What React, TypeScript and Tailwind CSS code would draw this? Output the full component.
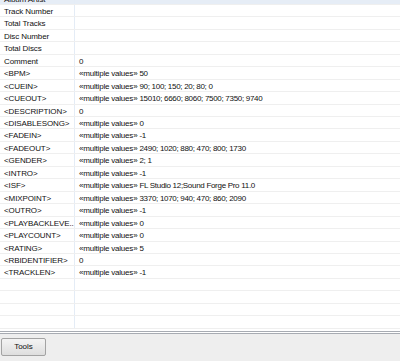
import React from "react";

const rows: [string, string, boolean][] = [
  ["Album Artist", "", false],
  ["Track Number", "", false],
  ["Total Tracks", "", false],
  ["Disc Number", "", false],
  ["Total Discs", "", false],
  ["Comment", "0", false],
  ["<BPM>", "50", true],
  ["<CUEIN>", "90; 100; 150; 20; 80; 0", true],
  ["<CUEOUT>", "15010; 6660; 8060; 7500; 7350; 9740", true],
  ["<DESCRIPTION>", "0", false],
  ["<DISABLESONG>", "0", true],
  ["<FADEIN>", "-1", true],
  ["<FADEOUT>", "2490; 1020; 880; 470; 800; 1730", true],
  ["<GENDER>", "2; 1", true],
  ["<INTRO>", "-1", true],
  ["<ISF>", "FL Studio 12;Sound Forge Pro 11.0", true],
  ["<MIXPOINT>", "3370; 1070; 940; 470; 860; 2090", true],
  ["<OUTRO>", "-1", true],
  ["<PLAYBACKLEVE...", "0", true],
  ["<PLAYCOUNT>", "0", true],
  ["<RATING>", "5", true],
  ["<RBIDENTIFIER>", "0", false],
  ["<TRACKLEN>", "-1", true],
  ["", "", false],
  ["", "", false],
  ["", "", false],
  ["", "", false],
];

const App = () => {
  return (
    <div
      className="w-[400px] h-[361px] bg-white flex flex-col overflow-hidden text-[8px] text-[#111111]"
      style={{ fontFamily: '"Liberation Sans", Arial, sans-serif' }}
    >
      <div className="h-[331px] overflow-hidden">
        <div className="mt-[-7.5px]">
          {rows.map(([name, value, multi], i) => (
            <div
              key={i}
              className={`flex h-[12.46px] border-b border-[#efefef] ${i === 0 ? "bg-[#e6edf6]" : ""}`}
            >
              <div className="w-[75px] shrink-0 pl-[4px] pt-[1px] leading-[11px] tracking-[-0.1px] whitespace-nowrap overflow-hidden border-r border-[#e4ecf6]">
                {name}
              </div>
              <div className="pl-[4px] pt-[1px] leading-[11px] tracking-[-0.3px] whitespace-nowrap">
                {multi && <span className="text-[8px] tracking-[-0.2px]">«multiple values» </span>}
                {value}
              </div>
            </div>
          ))}
        </div>
      </div>
      <div className="h-[1px] bg-[#a7abb2]" />
      <div className="h-[1px] bg-white" />
      <div className="h-[1px] bg-[#a7abb2]" />
      <div className="flex-1 bg-[#eeeeee] pt-[4px] pl-[1px]">
        <button className="w-[45px] h-[18px] rounded-[2px] border border-[#a3a3a3] bg-gradient-to-b from-[#f4f4f4] to-[#dedede] text-[8px] text-[#111111] leading-none">
          Tools
        </button>
      </div>
    </div>
  );
};

export default App;
